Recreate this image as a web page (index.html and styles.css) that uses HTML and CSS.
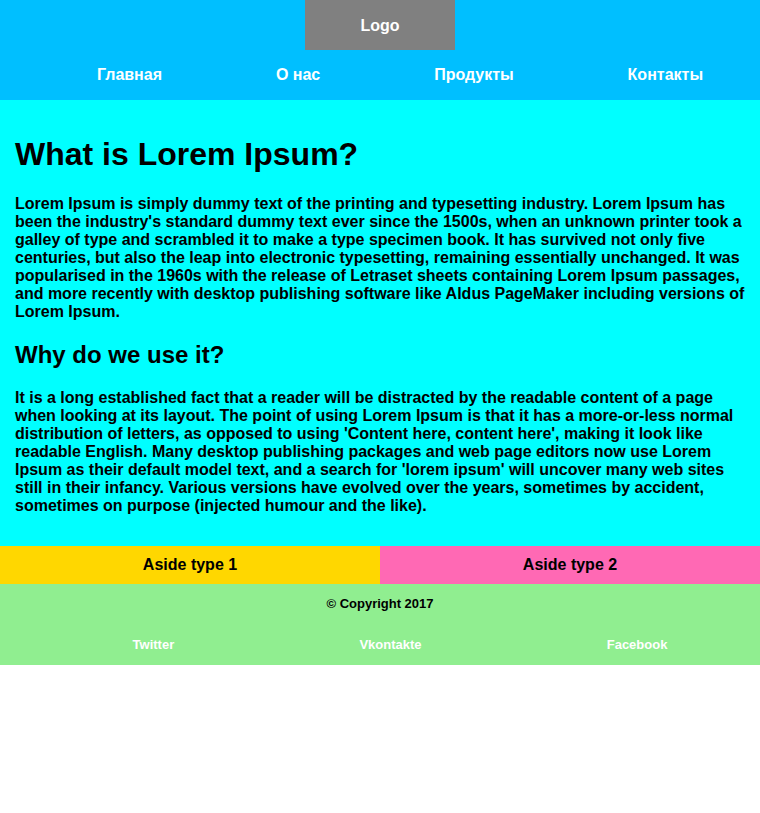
FILE: index.html
```html
<!DOCTYPE html>
<html lang="ru">
<head>
<meta charset="utf-8">
<title>Lorem Ipsum</title>
<link rel="stylesheet" href="styles.css">
</head>
<body>
<header class="header">
  <div class="logo">Logo</div>
  <nav>
    <ul class="nav">
      <li><a href="#">Главная</a></li>
      <li><a href="#">О нас</a></li>
      <li><a href="#">Продукты</a></li>
      <li><a href="#">Контакты</a></li>
    </ul>
  </nav>
</header>
<main class="main">
  <h1>What is Lorem Ipsum?</h1>
  <p>Lorem Ipsum is simply dummy text of the printing and typesetting industry. Lorem Ipsum has been the industry's standard dummy text ever since the 1500s, when an unknown printer took a galley of type and scrambled it to make a type specimen book. It has survived not only five centuries, but also the leap into electronic typesetting, remaining essentially unchanged. It was popularised in the 1960s with the release of Letraset sheets containing Lorem Ipsum passages, and more recently with desktop publishing software like Aldus PageMaker including versions of Lorem Ipsum.</p>
  <h2>Why do we use it?</h2>
  <p>It is a long established fact that a reader will be distracted by the readable content of a page when looking at its layout. The point of using Lorem Ipsum is that it has a more-or-less normal distribution of letters, as opposed to using 'Content here, content here', making it look like readable English. Many desktop publishing packages and web page editors now use Lorem Ipsum as their default model text, and a search for 'lorem ipsum' will uncover many web sites still in their infancy. Various versions have evolved over the years, sometimes by accident, sometimes on purpose (injected humour and the like).</p>
</main>
<div class="asides">
  <aside class="aside aside-1">Aside type 1</aside>
  <aside class="aside aside-2">Aside type 2</aside>
</div>
<footer class="footer">
  <p class="copy">© Copyright 2017</p>
  <ul class="social">
    <li><a href="#">Twitter</a></li>
    <li><a href="#">Vkontakte</a></li>
    <li><a href="#">Facebook</a></li>
  </ul>
</footer>
</body>
</html>
```

FILE: styles.css
```css
body {
  margin: 0;
  font-family: "Liberation Sans", Arial, sans-serif;
  font-weight: bold;
  color: #000;
  background: #fff;
}

a {
  color: #fff;
  text-decoration: none;
}

.header {
  background: #00bfff;
  height: 100px;
}

.logo {
  width: 150px;
  height: 50px;
  margin: 0 auto;
  background: #808080;
  color: #fff;
  font-size: 16px;
  line-height: 18px;
  padding-top: 2px;
  box-sizing: border-box;
  display: flex;
  align-items: center;
  justify-content: center;
}

.nav {
  list-style: none;
  margin: 0;
  padding: 16px 0 16px 40px;
  display: flex;
  justify-content: space-around;
  font-size: 16px;
  line-height: 18px;
}

.main {
  background: #00ffff;
  padding: 15px;
}

.main h1 {
  font-size: 32px;
  margin: 21.44px 0;
}

.main h2 {
  font-size: 24px;
  margin: 19.92px 0;
}

.main p {
  font-size: 16px;
  line-height: 18px;
  margin: 16px 0;
}

.asides {
  display: flex;
}

.aside {
  flex: 1;
  text-align: center;
  padding: 10px 0;
  font-size: 16px;
  line-height: 18px;
}

.aside-1 {
  background: #ffd700;
}

.aside-2 {
  background: #ff69b4;
}

.footer {
  background: #90ee90;
  height: 81px;
  font-size: 13px;
  line-height: 15px;
  overflow: hidden;
}

.copy {
  margin: 0;
  padding-top: 12px;
  text-align: center;
}

.social {
  list-style: none;
  margin: 26px 0 0;
  padding: 0 0 0 40px;
  display: flex;
  justify-content: space-around;
}
```
